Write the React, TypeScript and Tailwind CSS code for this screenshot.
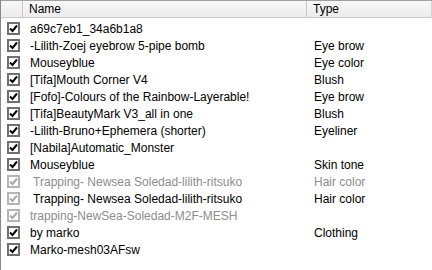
import React from "react";

interface Row {
  name: string;
  type?: string;
  dim?: boolean;
  dimText?: boolean;
}

const rows: Row[] = [
  { name: "a69c7eb1_34a6b1a8" },
  { name: "-Lilith-Zoej eyebrow 5-pipe bomb", type: "Eye brow" },
  { name: "Mouseyblue", type: "Eye color" },
  { name: "[Tifa]Mouth Corner V4", type: "Blush" },
  { name: "[Fofo]-Colours of the Rainbow-Layerable!", type: "Eye brow" },
  { name: "[Tifa]BeautyMark V3_all in one", type: "Blush" },
  { name: "-Lilith-Bruno+Ephemera (shorter)", type: "Eyeliner" },
  { name: "[Nabila]Automatic_Monster" },
  { name: "Mouseyblue", type: "Skin tone" },
  { name: " Trapping- Newsea Soledad-lilith-ritsuko", type: "Hair color", dim: true, dimText: true },
  { name: " Trapping- Newsea Soledad-lilith-ritsuko", type: "Hair color", dim: true },
  { name: "trapping-NewSea-Soledad-M2F-MESH", dim: true, dimText: true },
  { name: "by marko", type: "Clothing" },
  { name: "Marko-mesh03AFsw" },
];

function Check({ dim }: { dim?: boolean }) {
  return (
    <div
      className={`w-[13px] h-[13px] border-2 flex items-center justify-center bg-white ${
        dim ? "border-[#b4b4b4]" : "border-[#707070]"
      }`}
    >
      <svg width="9" height="9" viewBox="0 0 9 9">
        <path
          d="M1 4.5 L3.5 7 L8 1.5"
          fill="none"
          stroke={dim ? "#a8a8a8" : "#000"}
          strokeWidth="2"
        />
      </svg>
    </div>
  );
}

export default function App() {
  return (
    <div className="w-[432px] h-[270px] bg-white border-l border-[#828790] overflow-hidden font-['Liberation_Sans',Arial,sans-serif] text-[12px] text-black">
      {/* Header */}
      <div className="flex h-[18px] border-t border-[#a0a0a0] border-b border-b-[#c8c8c8] bg-gradient-to-b from-[#f7f7f7] to-[#ececec]">
        <div className="w-[22px] border-r border-[#c8c8c8]" />
        <div className="w-[284px] border-r border-[#c8c8c8] pl-[6px] flex items-center">
          Name
        </div>
        <div className="flex-1 pl-[6px] flex items-center border-r border-[#d5d5d5]">
          Type
        </div>
      </div>

      {/* Rows */}
      <div className="flex flex-col pt-[2px]">
        {rows.map((row, i) => (
          <div key={i} className="flex h-[17px] items-center">
            <div className="w-[23px] pl-[6px] flex items-center">
              <Check dim={row.dim} />
            </div>
            <div
              className={`w-[284px] pl-[6px] whitespace-pre ${
                row.dimText ? "text-[#8d8d8d]" : "text-black"
              }`}
            >
              {row.name}
            </div>
            <div
              className={`flex-1 pl-[6px] ${
                row.dimText ? "text-[#8d8d8d]" : "text-black"
              }`}
            >
              {row.type}
            </div>
          </div>
        ))}
      </div>
    </div>
  );
}
